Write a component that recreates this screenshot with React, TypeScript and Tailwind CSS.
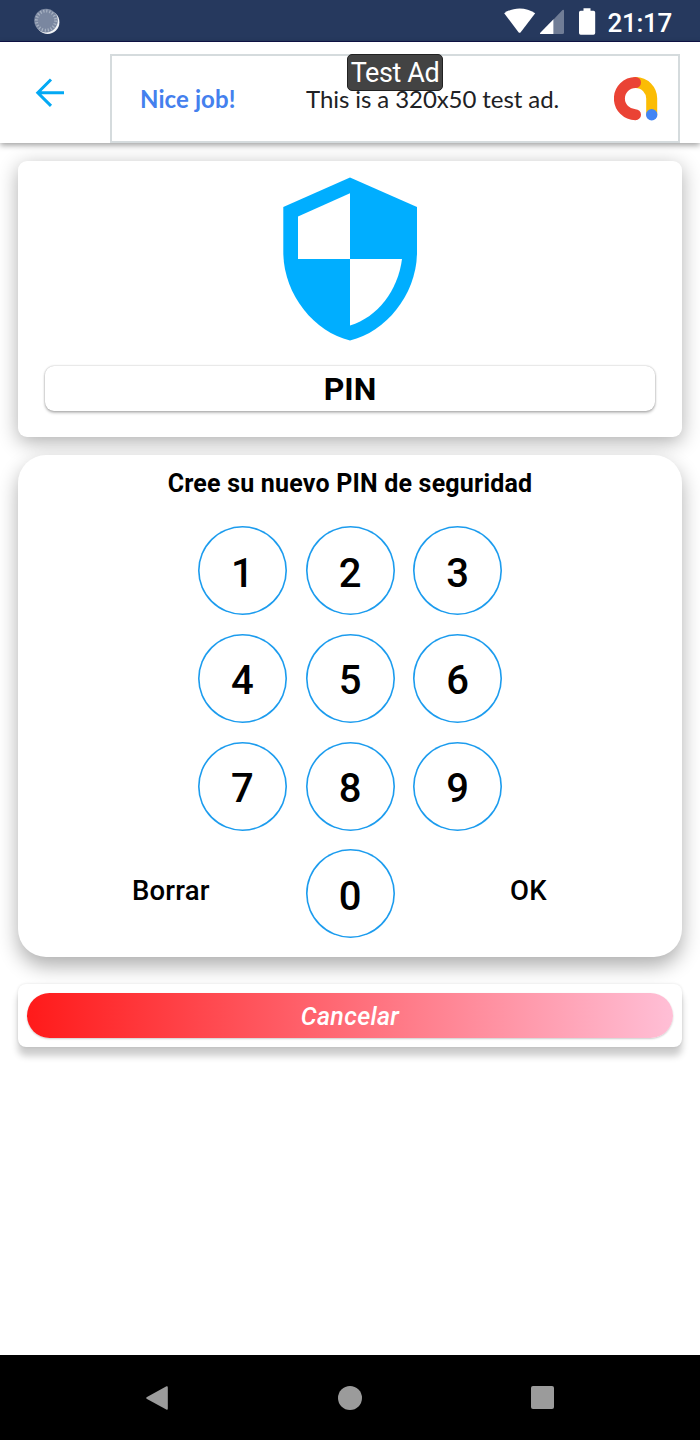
import React from 'react'

const rows = [
  ['1', '2', '3'],
  ['4', '5', '6'],
  ['7', '8', '9'],
];

function StatusBar() {
  return (
    <div className="flex h-[42px] items-start justify-between border-b border-[#10134a] bg-[#26395e] pl-[34px] pr-[28px]">
      <svg className="mt-[8px]" width="26" height="27" viewBox="0 0 26 27">
        <circle cx="13.6" cy="14.2" r="11.800" fill="#f1f3f6" />
        <circle cx="12" cy="12.6" r="11.8" fill="#7a87a0" />
        <circle cx="12" cy="12.6" r="9.600" fill="none" stroke="#a9b3c3" strokeWidth="3" strokeDasharray="1.2 1.813" />
      </svg>

      <div className="flex items-start">
        <svg className="mt-[8px]" width="32" height="26" viewBox="0 0 32 26">
          <path d="M0.2 5.2C4.7 2 10 0.4 15.6 0.4S26.600 2 31.200 5.200L16.700 24.200Q15.600 25.500 14.500 24.200Z" fill="#fff" />
        </svg>
        <svg className="ml-[4px] mt-[9px]" width="25" height="26" viewBox="0 0 25 26">
          <path d="M13.500 10.500L22.500 1.100Q24 0 24 1.800V23.500Q24 25 22.500 25H13.500Z" fill="#707d96" />
          <path d="M13.500 10.200V25H0.800Q-0.800 25 0.500 23.500Z" fill="#fff" />
        </svg>
        <svg className="ml-[14px] mt-[8px]" width="17" height="27" viewBox="0 0 17 27">
          <path d="M4.500 0.200H11.500V2.700H14.500Q16.200 2.700 16.200 4.400V25Q16.200 26.700 14.500 26.700H1.700Q0 26.700 0 25V4.400Q0 2.700 1.700 2.700H4.500Z" fill="#fff" />
        </svg>
        <span className="ml-[12px] mt-[8px] text-[26px] leading-[31px] font-medium tracking-[-0.3px] text-white">21:17</span>
      </div>
    </div>
  )
}

function AdBanner() {
  return (
    <div className="relative flex h-[89px] w-[570px] items-center border-2 border-[#d5dbdd] bg-white pl-[28px] font-['Lato','Open_Sans',sans-serif]">
      <span className="w-[166px] whitespace-nowrap pt-[1px] text-[24px] font-bold tracking-[0.1px] text-[#4480ee]">Nice job!</span>
      <span className="w-[308px] whitespace-nowrap pt-[1px] text-[24px] tracking-[-0.08px] text-[#202124]">This is a 320x50 test ad.</span>
      <svg width="44" height="44" viewBox="0 0 44 44" fill="none" strokeLinecap="round">
        <path d="M21.500 5.500A16.100 16.100 0 0 1 37.700 22V37" stroke="#fbbc04" strokeWidth="11" />
        <path d="M21.500 5.500A16.100 16.100 0 0 0 21.500 37.700" stroke="#ea4335" strokeWidth="11" />
        <circle cx="37.700" cy="37.700" r="5.700" fill="#4285f4" />
      </svg>
      <span className="absolute -top-[2px] left-[235px] flex h-[37px] w-[96px] items-center justify-center rounded-[5px] border border-[#222] bg-[#434343] pt-[2px] whitespace-nowrap font-[Roboto,sans-serif] text-[27px] tracking-[-0.4px] text-white">Test Ad</span>
    </div>
  )
}

function Header() {
  return (
    <div className="relative z-10 flex h-[101px] items-start bg-white pl-[35px] pt-[12px] shadow-[0_2px_6px_rgba(0,0,0,0.4)]">
      <button type="button" className="mt-[24px] mr-[45px]">
        <svg width="30" height="30" viewBox="0 0 30 30" fill="none" stroke="#03a9f4" strokeWidth="3">
          <path d="M29 14.700H3M16 1.500L2.800 14.700L16 27.900" />
        </svg>
      </button>
      <AdBanner />
    </div>
  )
}

function Shield() {
  return (
    <svg width="134" height="164" viewBox="0 0 134 164">
      <path d="M67 0.500L134 30V75C134 117 103 155 67 163.500C31 155 0.300 117 0.300 75V30Z" fill="#00aeff" />
      <path d="M67 16.200V82H15V39.500Z" fill="#fff" />
      <path d="M67 82H119C115 113 95 140 67 148.500Z" fill="#fff" />
    </svg>
  )
}

function Key({ value }: { value: string }) {
  return (
    <button type="button" className="flex size-[89px] items-center justify-center rounded-full pt-[6px] text-[40px] leading-none font-medium text-black shadow-[inset_0_0_0_1.6px_#1c9cee]">{value}</button>
  )
}

export default function App() {
  return (
    <div className="flex h-[1440px] w-[700px] flex-col overflow-hidden bg-white font-[Roboto,sans-serif] text-black">
      <StatusBar />
      <Header />

      <main className="flex flex-1 flex-col px-[18px] pt-[18px]">
        <section className="flex h-[276px] flex-col items-center rounded-[9px] bg-white pt-[16px] shadow-[0_5px_20px_rgba(0,0,0,0.32)]">
          <Shield />
          <div className="mt-[25px] flex h-[45px] w-[610px] items-center justify-center rounded-[9px] bg-white text-[32px] leading-none font-bold shadow-[0_2px_3px_rgba(0,0,0,0.25),0_0_2px_rgba(0,0,0,0.3)]">PIN</div>
        </section>

        <section className="relative mt-[18px] h-[502px] rounded-[28px] bg-white pt-[13px] shadow-[0_9px_20px_rgba(0,0,0,0.32)]">
          <h1 className="text-center text-[25px] leading-[32px] font-bold tracking-[0.2px]">Cree su nuevo PIN de seguridad</h1>
          <div className="mt-[26px] flex flex-col items-center gap-[18.800px]">
            {rows.map((row, key) => (
              <div key={key} className="flex gap-[18.700px]">
                {row.map((n) => <Key key={n} value={n} />)}
              </div>
            ))}
            <div className="grid w-full grid-cols-[287.500px_89px_1fr]">
              <button type="button" className="ml-[114px] mt-[24px] h-[36px] text-left text-[27.500px] leading-[36px] font-medium tracking-[0.2px]">Borrar</button>
              <Key value="0" />
              <button type="button" className="ml-[115.500px] mt-[24px] h-[36px] w-[60px] text-left text-[27.500px] leading-[36px] font-medium tracking-[0.2px]">OK</button>
            </div>
          </div>
        </section>

        <section className="relative mt-[27px] h-[63px] rounded-[8px] bg-white px-[9px] pt-[9px] shadow-[0_9px_7px_rgba(0,0,0,0.2),0_0_3px_rgba(0,0,0,0.12)]">
          <button type="button" className="flex h-[45px] w-full items-center justify-center rounded-full bg-linear-to-r/srgb from-[#ff1a1a] to-[#ffbfd6] pt-[3px] text-[25px] font-medium tracking-[0.3px] text-white italic shadow-[0_1px_2px_rgba(0,0,0,0.2)]">Cancelar</button>
        </section>
      </main>

      <nav className="flex h-[85px] items-center bg-black pl-[146px]">
        <svg width="22" height="24" viewBox="0 0 22 24"><path d="M20.500 0.300Q21.800 -0.300 21.800 1.500V22.500Q21.800 24.300 20.300 23.600L1 13Q-0.600 12 1 11Z" fill="#9b9b9b" /></svg>
        <div className="ml-[170px] size-[24px] rounded-full bg-[#9b9b9b]"></div>
        <div className="ml-[169px] size-[23px] rounded-[2px] bg-[#9b9b9b]"></div>
      </nav>
    </div>
  )
}
